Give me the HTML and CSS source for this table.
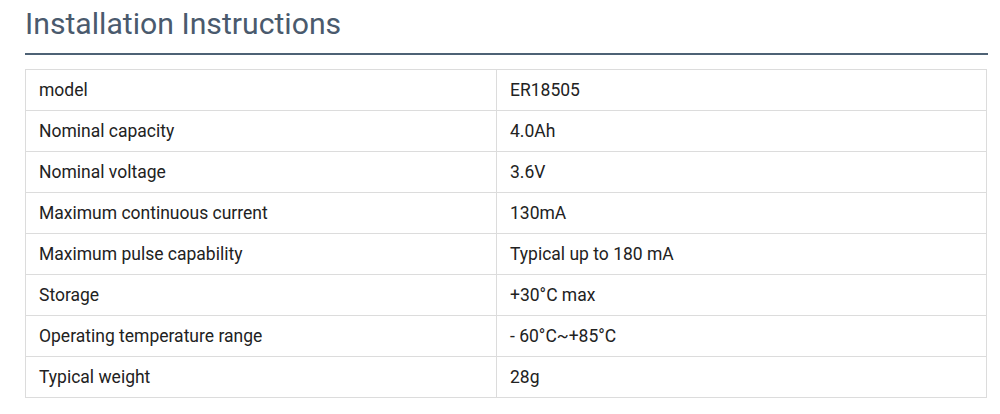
FILE: index.html
```html
<!DOCTYPE html>
<html>
<head>
<meta charset="utf-8">
<link rel="stylesheet" href="styles.css">
</head>
<body>
<div class="page">
  <h2 class="title">Installation Instructions</h2>
  <table class="spec">
    <tr><td>model</td><td>ER18505</td></tr>
    <tr><td>Nominal capacity</td><td>4.0Ah</td></tr>
    <tr><td>Nominal voltage</td><td>3.6V</td></tr>
    <tr><td>Maximum continuous current</td><td>130mA</td></tr>
    <tr><td>Maximum pulse capability</td><td>Typical up to 180 mA</td></tr>
    <tr><td>Storage</td><td>+30°C max</td></tr>
    <tr><td>Operating temperature range</td><td>- 60°C~+85°C</td></tr>
    <tr><td>Typical weight</td><td>28g</td></tr>
  </table>
</div>
</body>
</html>
```

FILE: styles.css
```css
html, body {
  margin: 0;
  padding: 0;
  background: #fff;
}
.page {
  width: 963px;
  margin-left: 25px;
  font-family: Roboto, "Liberation Sans", sans-serif;
}
.title {
  margin: 0;
  font-weight: 400;
  font-size: 30.2px;
  line-height: 36px;
  padding-top: 6px;
  padding-bottom: 11px;
  color: #4a5a6d;
  border-bottom: 2px solid #4e6275;
}
.spec {
  margin-top: 14px;
  width: 962px;
  border-collapse: collapse;
  font-size: 17.5px;
  color: #222;
}
.spec td {
  border: 1px solid #dcdcdc;
  height: 41px;
  padding: 0 13px;
  box-sizing: border-box;
  vertical-align: middle;
}
.spec td:first-child {
  width: 471px;
}
```
